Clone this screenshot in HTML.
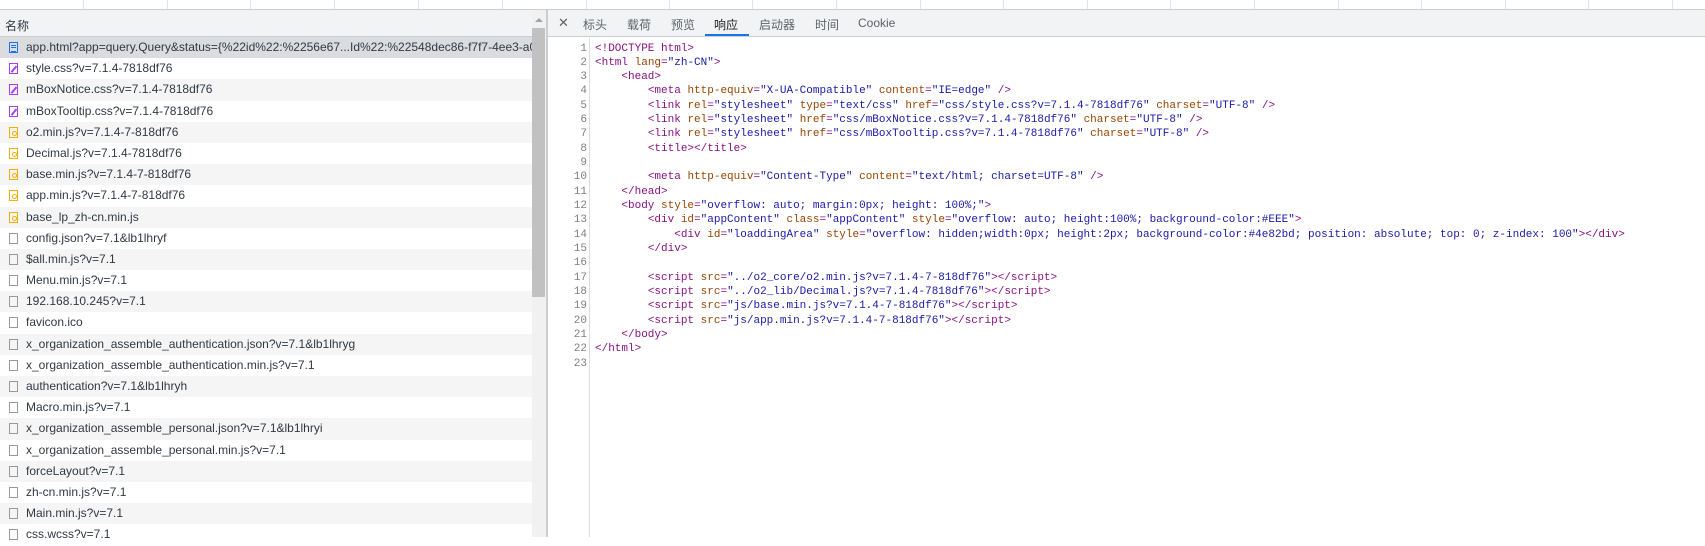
<!DOCTYPE html>
<html><head><meta charset="utf-8"><style>
*{margin:0;padding:0;box-sizing:border-box}
body{width:1705px;height:537px;overflow:hidden;background:#fff;font-family:"Liberation Sans","Noto Sans CJK SC",sans-serif;position:relative}
.top{position:absolute;left:0;top:0;width:1705px;height:10px;border-bottom:1px solid #cbcdd1;background:#fff}
.top i{position:absolute;top:0;width:1px;height:9px;background:#e4e4e4}
.lhead{position:absolute;left:0;top:10px;width:547px;height:27px;background:#f1f3f4;border-bottom:1px solid #cbcdd1;font-size:12px;color:#303942;padding:7px 0 0 5px}
.rows{position:absolute;left:0;top:37px;width:532px}
.row{height:21.2px;font-size:12px;color:#303942;position:relative;white-space:nowrap;overflow:hidden;padding-left:26px;line-height:21.2px}
.row:nth-child(odd){background:#f5f5f5}
.row:nth-child(even){background:#fff}
.row.sel{background:#dadce0}
.ic{position:absolute;left:9px;top:5px;width:9px;height:11px;border:1px solid #888}
.doc{border-color:#1a73e8}
.doc:before{content:"";position:absolute;left:1px;top:2px;width:5px;height:5px;border-top:1px solid #1a73e8;border-bottom:1px solid #1a73e8}
.doc:after{content:"";position:absolute;left:1px;top:4px;width:5px;height:1px;background:#1a73e8}
.css{border-color:#a142f4}
.css:before{content:"";position:absolute;left:3px;top:1px;width:1.5px;height:8px;background:#a142f4;transform:rotate(40deg)}
.js{border-color:#f2b100}
.js:before{content:"";position:absolute;left:2px;top:3px;width:3px;height:3px;border:1px solid #f2b100;border-radius:50%}
.oth{border-color:#999;height:11px}
.sb{position:absolute;left:532px;top:10px;width:14px;height:527px;background:#f1f1f1}
.sb .th{position:absolute;left:0;top:18px;width:13px;height:269px;background:#c1c1c1}
.sb .ar{position:absolute;left:3px;top:8px;width:0;height:0;border-left:4px solid transparent;border-right:4px solid transparent;border-bottom:4px solid #a3a3a3}
.div{position:absolute;left:546px;top:10px;width:2px;height:527px;background:#cbcdd1}
.tabs{position:absolute;left:548px;top:10px;width:1157px;height:27px;background:#f1f3f4;border-bottom:1px solid #cbcdd1}
.tab{position:absolute;top:6px;font-size:12px;color:#5f6368}
.ul{position:absolute;left:157px;top:24px;width:44px;height:2px;background:#1a73e8}
.gut{position:absolute;left:589px;top:38px;width:1px;height:499px;background:#ddd}
pre{position:absolute;top:41.5px;font-family:"Liberation Mono",monospace;font-size:11px;line-height:14.33px}
.nums{left:548px;width:39px;text-align:right;color:#808080}
.code{left:595px;color:#222}
.t{color:#881280}.a{color:#994500}.v{color:#1a1aa6}
</style></head><body>
<div class="top">
<i style="left:83px"></i><i style="left:167px"></i><i style="left:250px"></i><i style="left:334px"></i><i style="left:418px"></i><i style="left:502px"></i><i style="left:586px"></i><i style="left:669px"></i><i style="left:752px"></i><i style="left:836px"></i><i style="left:920px"></i><i style="left:1003px"></i><i style="left:1087px"></i><i style="left:1170px"></i><i style="left:1254px"></i><i style="left:1338px"></i><i style="left:1421px"></i><i style="left:1505px"></i><i style="left:1588px"></i><i style="left:1672px"></i>
</div>
<div class="lhead">名称</div>
<div class="rows">
<div class="row sel"><span class="ic doc"></span>app.html?app=query.Query&amp;status={%22id%22:%2256e67...Id%22:%22548dec86-f7f7-4ee3-a0...</div>
<div class="row"><span class="ic css"></span>style.css?v=7.1.4-7818df76</div>
<div class="row"><span class="ic css"></span>mBoxNotice.css?v=7.1.4-7818df76</div>
<div class="row"><span class="ic css"></span>mBoxTooltip.css?v=7.1.4-7818df76</div>
<div class="row"><span class="ic js"></span>o2.min.js?v=7.1.4-7-818df76</div>
<div class="row"><span class="ic js"></span>Decimal.js?v=7.1.4-7818df76</div>
<div class="row"><span class="ic js"></span>base.min.js?v=7.1.4-7-818df76</div>
<div class="row"><span class="ic js"></span>app.min.js?v=7.1.4-7-818df76</div>
<div class="row"><span class="ic js"></span>base_lp_zh-cn.min.js</div>
<div class="row"><span class="ic oth"></span>config.json?v=7.1&amp;lb1lhryf</div>
<div class="row"><span class="ic oth"></span>$all.min.js?v=7.1</div>
<div class="row"><span class="ic oth"></span>Menu.min.js?v=7.1</div>
<div class="row"><span class="ic oth"></span>192.168.10.245?v=7.1</div>
<div class="row"><span class="ic oth"></span>favicon.ico</div>
<div class="row"><span class="ic oth"></span>x_organization_assemble_authentication.json?v=7.1&amp;lb1lhryg</div>
<div class="row"><span class="ic oth"></span>x_organization_assemble_authentication.min.js?v=7.1</div>
<div class="row"><span class="ic oth"></span>authentication?v=7.1&amp;lb1lhryh</div>
<div class="row"><span class="ic oth"></span>Macro.min.js?v=7.1</div>
<div class="row"><span class="ic oth"></span>x_organization_assemble_personal.json?v=7.1&amp;lb1lhryi</div>
<div class="row"><span class="ic oth"></span>x_organization_assemble_personal.min.js?v=7.1</div>
<div class="row"><span class="ic oth"></span>forceLayout?v=7.1</div>
<div class="row"><span class="ic oth"></span>zh-cn.min.js?v=7.1</div>
<div class="row"><span class="ic oth"></span>Main.min.js?v=7.1</div>
<div class="row"><span class="ic oth"></span>css.wcss?v=7.1</div>
</div>
<div class="sb"><div class="ar"></div><div class="th"></div></div>
<div class="div"></div>
<div class="tabs">
<span class="tab" style="left:10px;font-size:13px;top:5px">✕</span>
<span class="tab" style="left:35px">标头</span>
<span class="tab" style="left:79px">载荷</span>
<span class="tab" style="left:123px">预览</span>
<span class="tab" style="left:166px;color:#202124">响应</span>
<span class="tab" style="left:211px">启动器</span>
<span class="tab" style="left:267px">时间</span>
<span class="tab" style="left:310px">Cookie</span>
<div class="ul"></div>
</div>
<div class="gut"></div>
<pre class="nums">1
2
3
4
5
6
7
8
9
10
11
12
13
14
15
16
17
18
19
20
21
22
23</pre>
<pre class="code"><span class="t">&lt;!DOCTYPE html&gt;</span>
<span class="t">&lt;html</span> <span class="a">lang</span><span class="t">=</span><span class="v">"zh-CN"</span><span class="t">&gt;</span>
    <span class="t">&lt;head&gt;</span>
        <span class="t">&lt;meta</span> <span class="a">http-equiv</span><span class="t">=</span><span class="v">"X-UA-Compatible"</span> <span class="a">content</span><span class="t">=</span><span class="v">"IE=edge"</span> <span class="t">/&gt;</span>
        <span class="t">&lt;link</span> <span class="a">rel</span><span class="t">=</span><span class="v">"stylesheet"</span> <span class="a">type</span><span class="t">=</span><span class="v">"text/css"</span> <span class="a">href</span><span class="t">=</span><span class="v">"css/style.css?v=7.1.4-7818df76"</span> <span class="a">charset</span><span class="t">=</span><span class="v">"UTF-8"</span> <span class="t">/&gt;</span>
        <span class="t">&lt;link</span> <span class="a">rel</span><span class="t">=</span><span class="v">"stylesheet"</span> <span class="a">href</span><span class="t">=</span><span class="v">"css/mBoxNotice.css?v=7.1.4-7818df76"</span> <span class="a">charset</span><span class="t">=</span><span class="v">"UTF-8"</span> <span class="t">/&gt;</span>
        <span class="t">&lt;link</span> <span class="a">rel</span><span class="t">=</span><span class="v">"stylesheet"</span> <span class="a">href</span><span class="t">=</span><span class="v">"css/mBoxTooltip.css?v=7.1.4-7818df76"</span> <span class="a">charset</span><span class="t">=</span><span class="v">"UTF-8"</span> <span class="t">/&gt;</span>
        <span class="t">&lt;title&gt;&lt;/title&gt;</span>

        <span class="t">&lt;meta</span> <span class="a">http-equiv</span><span class="t">=</span><span class="v">"Content-Type"</span> <span class="a">content</span><span class="t">=</span><span class="v">"text/html; charset=UTF-8"</span> <span class="t">/&gt;</span>
    <span class="t">&lt;/head&gt;</span>
    <span class="t">&lt;body</span> <span class="a">style</span><span class="t">=</span><span class="v">"overflow: auto; margin:0px; height: 100%;"</span><span class="t">&gt;</span>
        <span class="t">&lt;div</span> <span class="a">id</span><span class="t">=</span><span class="v">"appContent"</span> <span class="a">class</span><span class="t">=</span><span class="v">"appContent"</span> <span class="a">style</span><span class="t">=</span><span class="v">"overflow: auto; height:100%; background-color:#EEE"</span><span class="t">&gt;</span>
            <span class="t">&lt;div</span> <span class="a">id</span><span class="t">=</span><span class="v">"loaddingArea"</span> <span class="a">style</span><span class="t">=</span><span class="v">"overflow: hidden;width:0px; height:2px; background-color:#4e82bd; position: absolute; top: 0; z-index: 100"</span><span class="t">&gt;&lt;/div&gt;</span>
        <span class="t">&lt;/div&gt;</span>

        <span class="t">&lt;script</span> <span class="a">src</span><span class="t">=</span><span class="v">"../o2_core/o2.min.js?v=7.1.4-7-818df76"</span><span class="t">&gt;&lt;/script&gt;</span>
        <span class="t">&lt;script</span> <span class="a">src</span><span class="t">=</span><span class="v">"../o2_lib/Decimal.js?v=7.1.4-7818df76"</span><span class="t">&gt;&lt;/script&gt;</span>
        <span class="t">&lt;script</span> <span class="a">src</span><span class="t">=</span><span class="v">"js/base.min.js?v=7.1.4-7-818df76"</span><span class="t">&gt;&lt;/script&gt;</span>
        <span class="t">&lt;script</span> <span class="a">src</span><span class="t">=</span><span class="v">"js/app.min.js?v=7.1.4-7-818df76"</span><span class="t">&gt;&lt;/script&gt;</span>
    <span class="t">&lt;/body&gt;</span>
<span class="t">&lt;/html&gt;</span>
</pre>
</body></html>
